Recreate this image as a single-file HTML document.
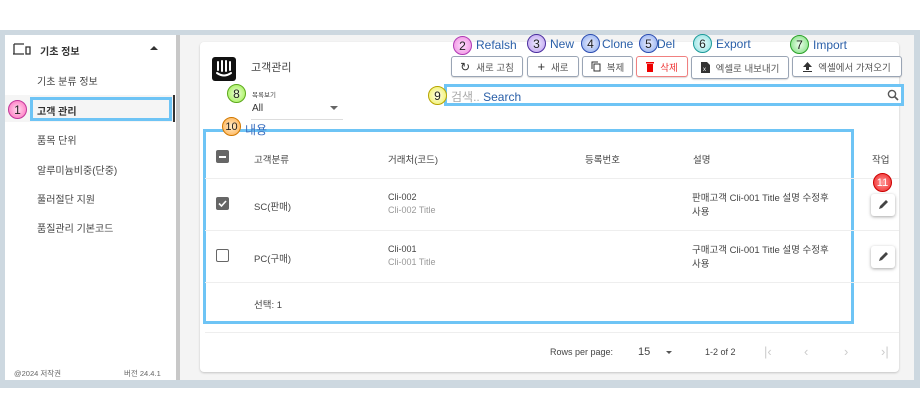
<!DOCTYPE html>
<html><head><meta charset="utf-8"><style>
*{box-sizing:border-box;margin:0;padding:0}
body{width:920px;height:400px;background:#fff;position:relative;overflow:hidden;font-family:"Liberation Sans","Noto Sans CJK KR",sans-serif;color:#333}
.abs{position:absolute}
.frame{left:0;top:30px;width:920px;height:358px;background:#cdd8e0}
.side{left:5px;top:35px;width:171px;height:345px;background:#fff}
.div{left:176px;top:35px;width:4px;height:345px;background:#c8c8c8}
.main{left:180px;top:35px;width:734px;height:345px;background:#f4f4f4}
.card{left:200px;top:42px;width:699px;height:330px;background:#fff;border-radius:4px;box-shadow:0 1px 2px rgba(0,0,0,.2)}
.t{font-size:10px;color:#444;white-space:nowrap}
.b{position:absolute;width:19px;height:19px;border-radius:50%;font-size:12px;display:flex;align-items:center;justify-content:center;color:#222;border:1.5px solid}
.lbl{position:absolute;font-size:12px;color:#2a5fa8;white-space:nowrap}
.btn{position:absolute;top:56px;height:21px;border:1px solid #9aa5b5;border-radius:3px;background:#fff;font-size:9.5px;color:#555;display:flex;align-items:center;justify-content:center;gap:6px;box-shadow:0 1px 1px rgba(0,0,0,.15)}
.blue{position:absolute;border:3px solid #6ec4f5}
.row{position:absolute;left:205px;width:694px;border-top:1px solid #eee}
.cb{position:absolute;width:13px;height:13px;border-radius:2px}
.pen{position:absolute;left:871px;width:24px;height:22px;border-radius:3px;box-shadow:0 1px 3px rgba(0,0,0,.35);background:#fff;display:flex;align-items:center;justify-content:center}
</style></head><body>
<div class="abs frame"></div>
<div class="abs side"></div>
<div class="abs div"></div>
<div class="abs main"></div>
<div class="abs card"></div>

<!-- sidebar -->
<svg class="abs" style="left:12px;top:42px" width="20" height="14" viewBox="0 0 20 14"><path d="M2 2h10M2 2v10H12M1 12h11" stroke="#333" stroke-width="1.3" fill="none"/><rect x="14" y="5" width="4" height="7" stroke="#333" stroke-width="1.3" fill="none"/></svg>
<div class="abs t" style="left:40px;top:43px;font-weight:bold;color:#333">기초 정보</div>
<div class="abs" style="left:150px;top:46px;width:0;height:0;border-left:4px solid transparent;border-right:4px solid transparent;border-bottom:4px solid #333"></div>
<div class="abs t" style="left:37px;top:73px">기초 분류 정보</div>
<div class="abs" style="left:5px;top:95px;width:170px;height:27px;background:#f5f5f5"></div>
<div class="abs" style="left:173px;top:95px;width:2px;height:27px;background:#333"></div>
<div class="blue" style="left:30px;top:97px;width:142px;height:24px"></div>
<div class="abs t" style="left:37px;top:103px;font-weight:bold;color:#333">고객 관리</div>
<div class="b" style="left:8px;top:100px;border-color:#c0379a;background:radial-gradient(#fde,#f6b)">1</div>
<div class="abs t" style="left:37px;top:132px">품목 단위</div>
<div class="abs t" style="left:37px;top:162px">알루미늄비중(단중)</div>
<div class="abs t" style="left:37px;top:191px">풀러절단 지원</div>
<div class="abs t" style="left:37px;top:220px">품질관리 기본코드</div>
<div class="abs t" style="left:14px;top:368px;font-size:7.5px;color:#666">@2024 저작권</div>
<div class="abs t" style="left:124px;top:368px;font-size:7.5px;color:#666">버전 24.4.1</div>

<!-- header -->
<div class="abs" style="left:212px;top:57px;width:24px;height:24px;background:#111;border-radius:3px"></div>
<svg class="abs" style="left:212px;top:57px" width="24" height="24" viewBox="0 0 24 24"><path d="M6 5v8M10 4v10M14 4v10M18 5v8M5 16q7 5 14 0" stroke="#fff" stroke-width="2" fill="none" stroke-linecap="round"/></svg>
<div class="abs t" style="left:251px;top:59px;font-size:11px;color:#444">고객관리</div>
<div class="abs t" style="left:252px;top:89px;font-size:6.5px;color:#444">목록보기</div>
<div class="abs t" style="left:252px;top:103px;font-size:10px;color:#333">All</div>
<div class="abs" style="left:330px;top:106px;border-left:4px solid transparent;border-right:4px solid transparent;border-top:4px solid #666"></div>
<div class="abs" style="left:251px;top:119px;width:92px;height:1px;background:#ddd"></div>
<div class="b" style="left:227px;top:84px;border-color:#5ca81c;background:radial-gradient(#efd,#9e4)">8</div>

<!-- labels top -->
<div class="b" style="left:453px;top:36px;border-color:#b03ab5;background:radial-gradient(#fdf,#e8d)">2</div>
<div class="lbl" style="left:476px;top:38px">Refalsh</div>
<div class="b" style="left:527px;top:34px;border-color:#4a2e9e;background:radial-gradient(#eef,#b9e)">3</div>
<div class="lbl" style="left:550px;top:37px">New</div>
<div class="b" style="left:581px;top:34px;border-color:#2c4cb0;background:radial-gradient(#eef,#8ae)">4</div>
<div class="lbl" style="left:602px;top:37px">Clone</div>
<div class="b" style="left:639px;top:34px;border-color:#2c4cb0;background:radial-gradient(#eef,#8ae)">5</div>
<div class="lbl" style="left:657px;top:37px">Del</div>
<div class="b" style="left:693px;top:34px;border-color:#1c9a9a;background:radial-gradient(#eff,#8dd)">6</div>
<div class="lbl" style="left:716px;top:37px">Export</div>
<div class="b" style="left:790px;top:35px;border-color:#2aa02a;background:radial-gradient(#efe,#7d7)">7</div>
<div class="lbl" style="left:813px;top:38px">Import</div>

<!-- buttons -->
<div class="btn" style="left:451px;width:72px"><span style="font-size:12px;color:#333">↻</span>새로 고침</div>
<div class="btn" style="left:527px;width:52px"><span style="font-size:13px;color:#333">+</span>새로</div>
<div class="btn" style="left:582px;width:51px"><svg width="10" height="11" viewBox="0 0 10 11"><rect x="3" y="3" width="6" height="7" fill="none" stroke="#333"/><path d="M1 8V1h6" fill="none" stroke="#333"/></svg>복제</div>
<div class="btn" style="left:636px;width:52px;border-color:#f08080;color:#e33"><svg width="8" height="10"><rect x="1" y="2" width="6" height="8" fill="#e00"/><rect x="0" y="0" width="8" height="1.5" fill="#e00"/></svg>삭제</div>
<div class="btn" style="left:691px;width:98px;height:23px"><svg width="9" height="11"><path d="M0 0h6l3 3v8H0z" fill="#333"/><text x="2" y="9" font-size="6" fill="#fff">x</text></svg>엑셀로 내보내기</div>
<div class="btn" style="left:792px;width:110px"><svg width="9" height="10"><path d="M4.5 0L9 5H6v3H3V5H0z M0 9h9v1H0z" fill="#333"/></svg>엑셀에서 가져오기</div>

<!-- search -->
<div class="blue" style="left:444px;top:84px;width:460px;height:22px;background:#fff"></div>
<div class="abs" style="left:451px;top:88px;font-size:12px;white-space:nowrap"><span style="color:#aaa">검색..</span> <span style="color:#2a5fa8">Search</span></div>
<svg class="abs" style="left:887px;top:89px" width="12" height="12" viewBox="0 0 12 12"><circle cx="5" cy="5" r="3.6" fill="none" stroke="#555" stroke-width="1.4"/><path d="M7.5 7.5L11 11" stroke="#555" stroke-width="1.6"/></svg>
<div class="b" style="left:428px;top:86px;border-color:#b8a400;background:radial-gradient(#ffe,#ee5)">9</div>

<!-- table -->
<div class="blue" style="left:203px;top:129px;width:651px;height:195px"></div>
<div class="b" style="left:222px;top:117px;border-color:#d07800;background:radial-gradient(#fec,#fa4);font-size:11px">10</div>
<div class="lbl" style="left:245px;top:121px;color:#3a6fc0">내용</div>

<div class="cb" style="left:216px;top:150px;background:#666"><div style="margin:5.5px 3px;height:2px;background:#fff"></div></div>
<div class="abs t" style="left:254px;top:152px;font-size:9.5px">고객분류</div>
<div class="abs t" style="left:388px;top:152px;font-size:9.5px">거래처(코드)</div>
<div class="abs t" style="left:585px;top:152px;font-size:9.5px">등록번호</div>
<div class="abs t" style="left:693px;top:152px;font-size:9.5px">설명</div>
<div class="abs t" style="left:872px;top:152px;font-size:9.5px">작업</div>

<div class="row" style="top:178px"></div>
<div class="cb" style="left:216px;top:197px;background:#666"><svg width="13" height="13"><path d="M3 6.5l2.5 2.5 4.5-5" stroke="#fff" stroke-width="1.6" fill="none"/></svg></div>
<div class="abs t" style="left:254px;top:199px;font-size:9.5px">SC(판매)</div>
<div class="abs t" style="left:388px;top:192px;font-size:9px">Cli-002</div>
<div class="abs t" style="left:388px;top:205px;font-size:9px;color:#999">Cli-002 Title</div>
<div class="abs t" style="left:692px;top:192px;font-size:9.5px;line-height:14px">판매고객 Cli-001 Title 설명 수정후<br>사용</div>
<div class="b" style="left:873px;top:173px;border-color:#c00;background:radial-gradient(#f99,#e22);color:#fff;font-size:11px">11</div>
<div class="pen" style="top:194px"><svg width="12" height="12"><path d="M2 10l1-3 6-6 2 2-6 6z" fill="#444"/></svg></div>

<div class="row" style="top:230px"></div>
<div class="cb" style="left:216px;top:249px;border:1.5px solid #666"></div>
<div class="abs t" style="left:254px;top:251px;font-size:9.5px">PC(구매)</div>
<div class="abs t" style="left:388px;top:244px;font-size:9px">Cli-001</div>
<div class="abs t" style="left:388px;top:257px;font-size:9px;color:#999">Cli-001 Title</div>
<div class="abs t" style="left:692px;top:244px;font-size:9.5px;line-height:14px">구매고객 Cli-001 Title 설명 수정후<br>사용</div>
<div class="pen" style="top:246px"><svg width="12" height="12"><path d="M2 10l1-3 6-6 2 2-6 6z" fill="#444"/></svg></div>

<div class="row" style="top:282px"></div>
<div class="abs t" style="left:254px;top:297px;font-size:9.5px">선택: 1</div>
<div class="row" style="top:332px"></div>

<!-- pagination -->
<div class="abs t" style="left:550px;top:347px;font-size:9px">Rows per page:</div>
<div class="abs t" style="left:638px;top:346px;font-size:11px">15</div>
<div class="abs" style="left:666px;top:351px;border-left:3.5px solid transparent;border-right:3.5px solid transparent;border-top:3.5px solid #555"></div>
<div class="abs t" style="left:705px;top:347px;font-size:9px">1-2 of 2</div>
<div class="abs t" style="left:764px;top:344px;font-size:13px;color:#ccc">|‹</div>
<div class="abs t" style="left:804px;top:344px;font-size:13px;color:#ccc">‹</div>
<div class="abs t" style="left:844px;top:344px;font-size:13px;color:#ccc">›</div>
<div class="abs t" style="left:881px;top:344px;font-size:13px;color:#ccc">›|</div>
</body></html>
